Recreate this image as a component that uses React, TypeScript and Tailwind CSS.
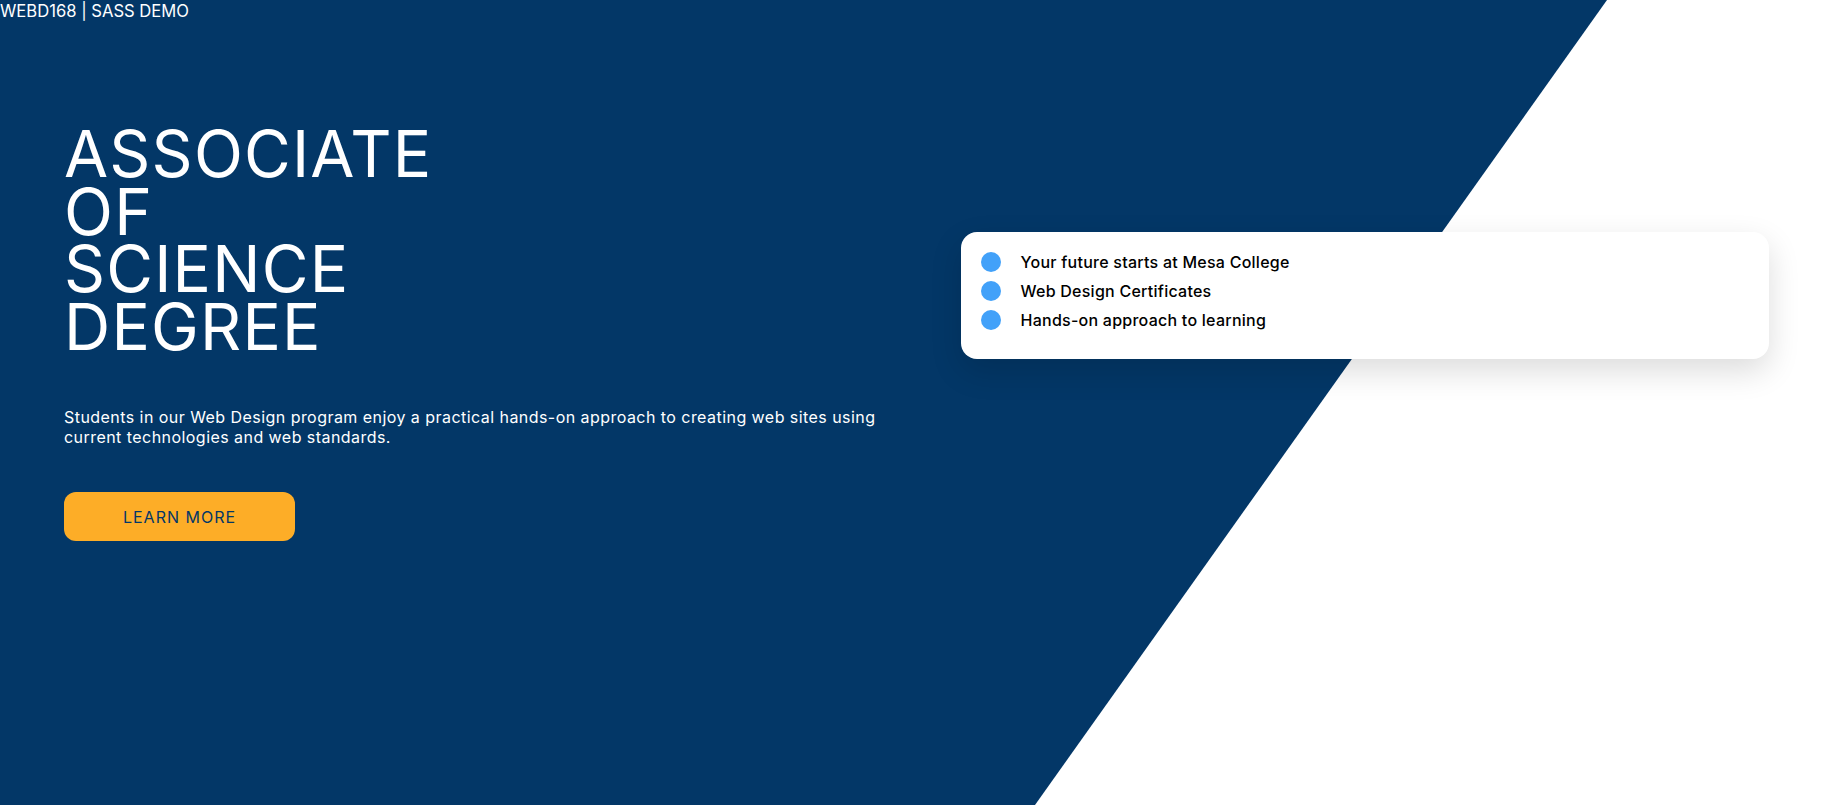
import { ReactNode } from 'react'

const features = [
  'Your future starts at Mesa College',
  'Web Design Certificates',
  'Hands-on approach to learning',
]

const titleLines = ['ASSOCIATE', 'OF', 'SCIENCE', 'DEGREE']

function Bullet({ children }: { children: ReactNode }) {
  return (
    <li className="flex items-center gap-5 h-[29px]">
      <span className="w-5 h-5 rounded-full bg-[#42a1f9] shrink-0" />
      <span className="text-[16px] font-medium tracking-[0.25px] text-black">{children}</span>
    </li>
  )
}

export default function App() {
  return (
    <div className="relative h-[805px] overflow-hidden bg-[#033767] font-['Inter',sans-serif]">
      {/* white wedge on the right */}
      <div className="absolute inset-0 bg-white [clip-path:polygon(1607px_0,100%_0,100%_100%,1035px_100%)]" />

      <div className="relative">
        <header className="text-white text-[16.6px] leading-[22px]">WEBD168 | SASS DEMO</header>

        <main className="grid grid-cols-2">
          <section className="pl-16 pr-4 pt-[103px]">
            <h1 className="text-white text-[64px] leading-[57.6px] font-normal tracking-[1.2px]">
              {titleLines.map((l) => (
                <span key={l} className="block h-[57.6px]">
                  {l}
                </span>
              ))}
            </h1>
            <p className="mt-[52px] text-white text-[16px] leading-[20px] tracking-[0.45px]">
              Students in our Web Design program enjoy a practical hands-on approach to creating web sites using
              current technologies and web standards.
            </p>
            <button className="mt-[45px] w-[231px] h-[49px] rounded-xl bg-[#fdad27] text-[#033767] text-[16px] tracking-[1px]">
              LEARN MORE
            </button>
          </section>

          <section className="pl-10 pr-[72px] pt-[210px]">
            <div className="bg-white rounded-2xl h-[127px] px-5 pt-[15px] shadow-[0_12px_32px_rgba(0,0,0,0.14)]">
              <ul>
                {features.map((f) => (
                  <Bullet key={f}>{f}</Bullet>
                ))}
              </ul>
            </div>
          </section>
        </main>
      </div>
    </div>
  )
}
